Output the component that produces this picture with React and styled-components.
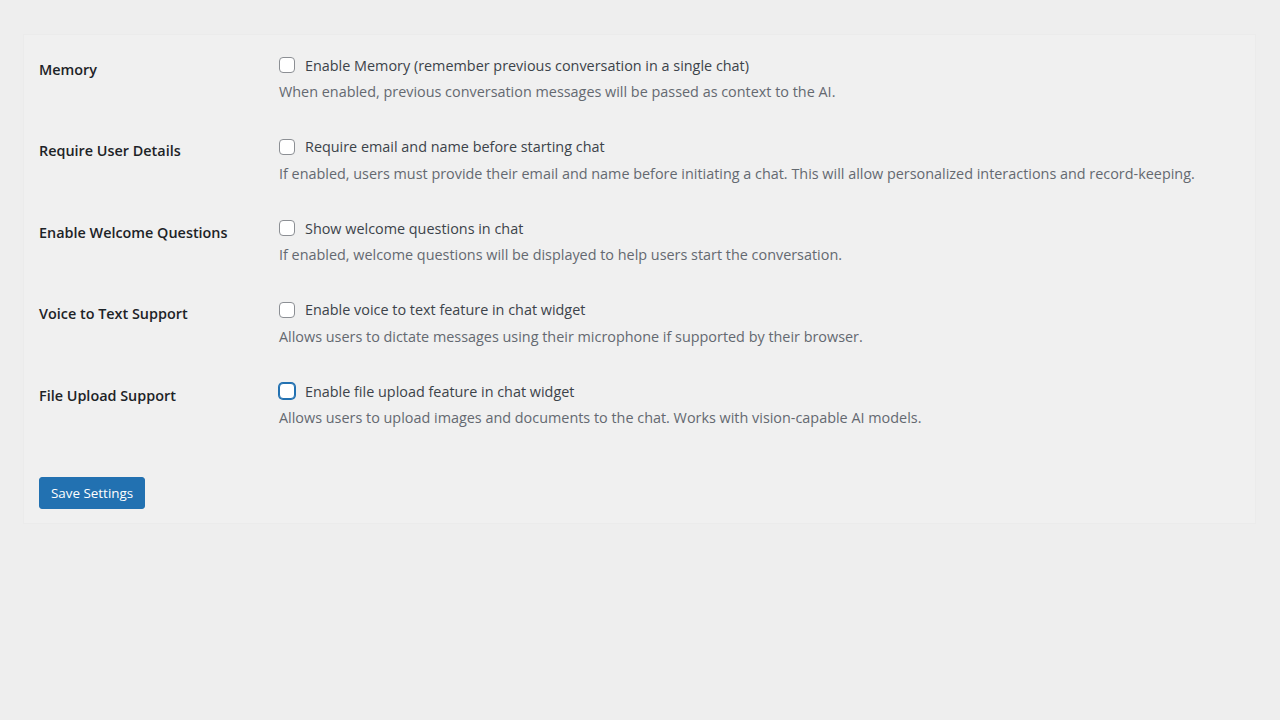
import styled, { createGlobalStyle } from 'styled-components';

const GlobalStyle = createGlobalStyle`
  body {
    margin: 0;
    background: #eeeeee;
    font-family: "Open Sans", "Noto Sans", sans-serif;
    color: #3c434a;
  }
`;

const Page = styled.div`
  padding: 34px 24px 0 23px;
  min-height: 720px;
  box-sizing: border-box;
`;

const Panel = styled.form`
  background: #f0f0f0;
  border: 1px solid #ebebeb;
  padding: 3px 15px 14px;
`;

const Row = styled.div`
  display: grid;
  grid-template-columns: 240px 1fr;
`;

const Label = styled.div`
  padding-top: 20.5px;
  line-height: 22px;
  font-size: 14.4px;
  font-weight: 600;
  color: #1d2327;
`;

const Field = styled.div`
  padding: 16px 0 16.5px;
  font-size: 14.4px;
`;

const CheckLine = styled.label`
  display: flex;
  align-items: center;
  gap: 10px;
  height: 22px;
  color: #3c434a;
`;

const Box = styled.span`
  width: 16px;
  height: 16px;
  box-sizing: border-box;
  border-radius: 4px;
  background: #fff;
  border: 1px solid ${p => (p.$focus ? '#2271b1' : '#8c8f94')};
  box-shadow: ${p => (p.$focus ? '0 0 0 1px #2271b1' : 'none')};
`;

const Description = styled.p`
  margin: 5px 0 0;
  line-height: 22px;
  color: #646970;
`;

const SaveButton = styled.button`
  margin-top: 31px;
  height: 32px;
  padding: 0 11px;
  background: #2271b1;
  border: 1px solid #2271b1;
  border-radius: 3px;
  color: #fff;
  font-family: inherit;
  font-size: 13.4px;
  cursor: pointer;
`;

const settings = [
  {
    label: 'Memory',
    check: 'Enable Memory (remember previous conversation in a single chat)',
    desc: 'When enabled, previous conversation messages will be passed as context to the AI.',
  },
  {
    label: 'Require User Details',
    check: 'Require email and name before starting chat',
    desc: 'If enabled, users must provide their email and name before initiating a chat. This will allow personalized interactions and record-keeping.',
  },
  {
    label: 'Enable Welcome Questions',
    check: 'Show welcome questions in chat',
    desc: 'If enabled, welcome questions will be displayed to help users start the conversation.',
  },
  {
    label: 'Voice to Text Support',
    check: 'Enable voice to text feature in chat widget',
    desc: 'Allows users to dictate messages using their microphone if supported by their browser.',
  },
  {
    label: 'File Upload Support',
    check: 'Enable file upload feature in chat widget',
    desc: 'Allows users to upload images and documents to the chat. Works with vision-capable AI models.',
    focus: true,
  },
];

export default function App() {
  return (
    <Page>
      <GlobalStyle />
      <Panel onSubmit={e => e.preventDefault()}>
        {settings.map(s => (
          <Row key={s.label}>
            <Label>{s.label}</Label>
            <Field>
              <CheckLine>
                <Box $focus={s.focus} />
                {s.check}
              </CheckLine>
              <Description>{s.desc}</Description>
            </Field>
          </Row>
        ))}
        <SaveButton type="submit">Save Settings</SaveButton>
      </Panel>
    </Page>
  );
}
